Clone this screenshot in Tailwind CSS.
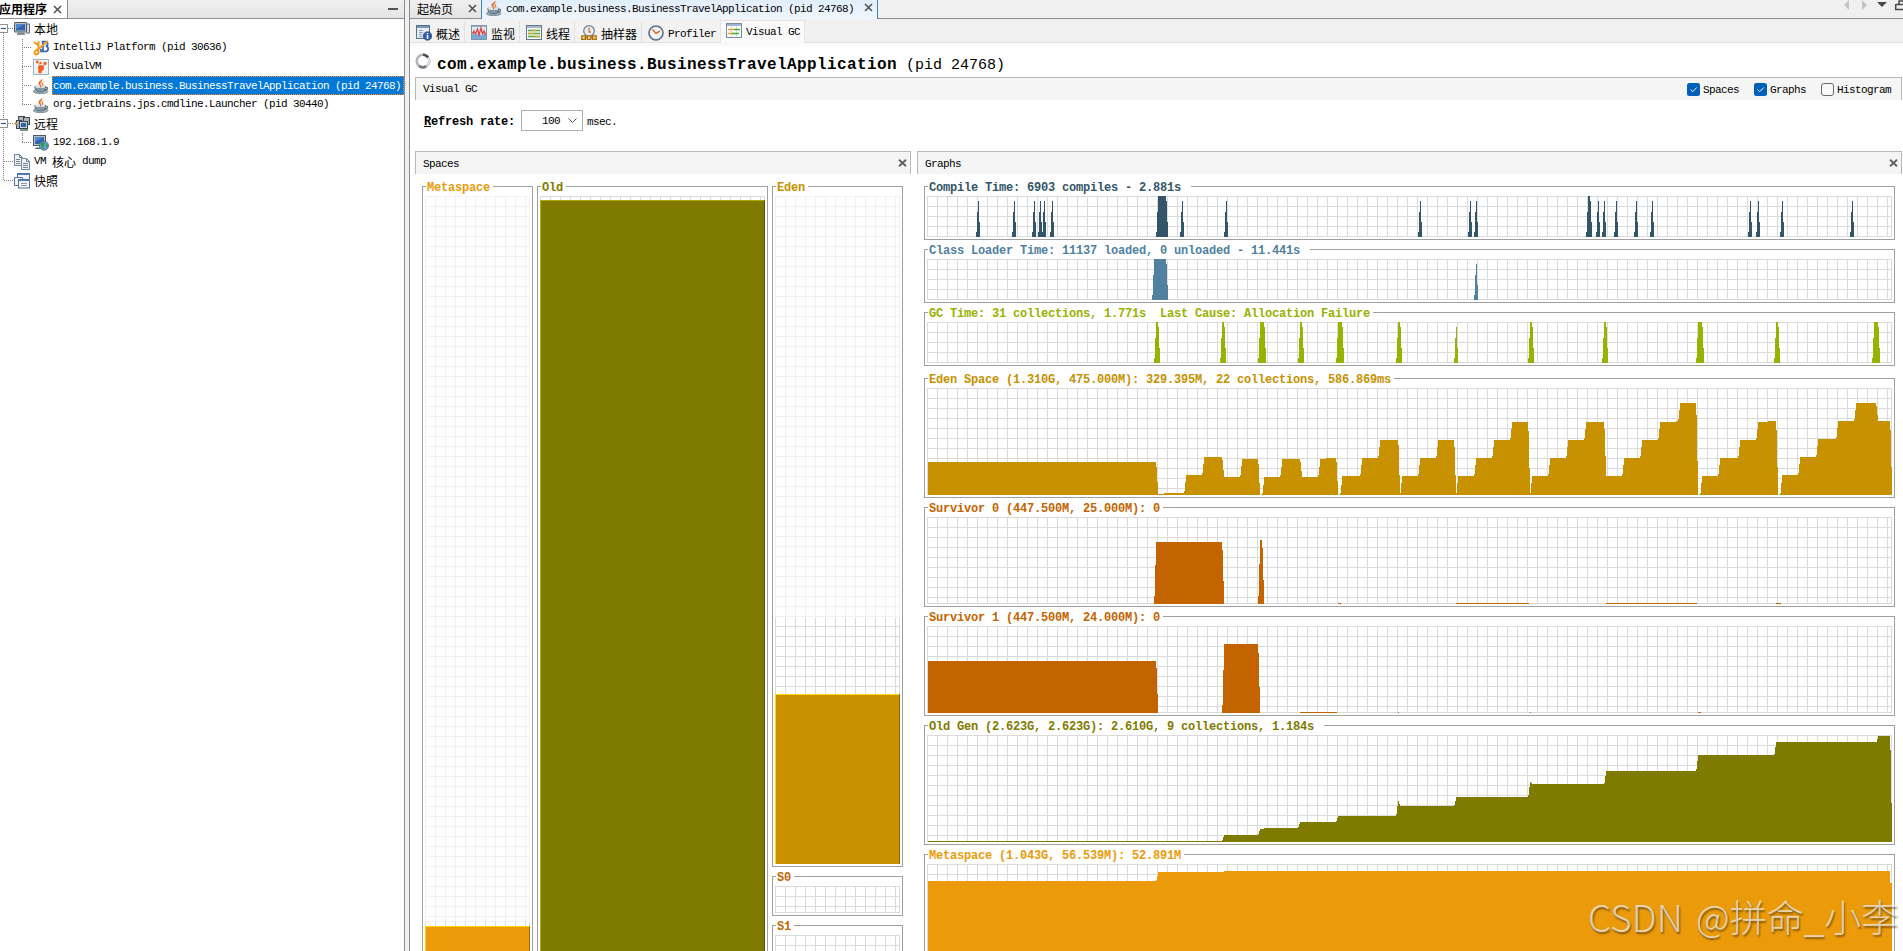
<!DOCTYPE html>
<html lang="zh-CN">
<head>
    <meta charset="UTF-8">
    <meta name="viewport" content="width=device-width, initial-scale=1.0">
    <title>VisualVM - Visual GC</title>
    <script src="https://cdn.jsdelivr.net/npm/@tailwindcss/browser@4"></script>
    <style>
        body { font-family: 'Liberation Mono', 'Noto Sans CJK SC', monospace; font-size: 11px; letter-spacing: -0.6px; line-height: 19px; color: #000; }
        .cjk { font-family: 'Noto Sans CJK SC', sans-serif; font-size: 12px; letter-spacing: 0; }
        /* titled boxes */
        fieldset { border: 1px solid #a0a0a0; padding: 3px 2px 2px; min-width: 0; }
        legend { height: 13px; line-height: 16px; margin-left: 1px; padding: 0 3px 0 1px; font-size: 12px; font-weight: 700; letter-spacing: -0.2px; white-space: pre; }
        /* 10px grid behind every chart */
        .grid-bg { --line: #dadada; position: relative; border-right: 1px solid var(--line); border-bottom: 1px solid var(--line); background-image: linear-gradient(var(--line) 1px, transparent 1px), linear-gradient(90deg, var(--line) 1px, transparent 1px); background-size: 10px 10px; }
        .grid-light { --line: #f1f1f1; }
        .chart { position: absolute; left: 0; top: 0; width: 965px; height: 100%; overflow: visible; shape-rendering: crispEdges; }
    </style>
</head>
<body class="bg-[#f0f0f0] w-[1903px] h-[951px] overflow-hidden relative">

    <!-- Icon sprite -->
    <svg class="hidden">
        <symbol id="i-java" viewBox="0 0 16 16">
            <path d="M8.800 0c1.200 2-3.300 3-3.300 5.200 0 1.500 1.500 2.200 2.100 3.600.6-1.600-.5-2.600-.1-3.700C8 3.800 10.600 2.500 8.800 0z" fill="#e8641b"/>
            <path d="M11 3C9 3.800 7.900 5 8.700 6.200c.5.800.3 1.600-.3 2.500 2.300-1.100 2.400-2.100 1.600-3.200-.5-.7 0-1.500 1-2.500z" fill="#f08a3c"/>
            <ellipse cx="7.600" cy="13.500" rx="7.300" ry="2.200" fill="#9fb0b8" stroke="#63777f" stroke-width=".7"/>
            <path d="M1.800 8.300h11c0 3.200-1.500 5.200-3.400 5.500H5.300C3.400 13.500 1.800 11.500 1.800 8.300z" fill="#8299a5" stroke="#4b6370" stroke-width=".8"/>
            <ellipse cx="7.300" cy="8.700" rx="5.300" ry="1.200" fill="#dfe7ea"/>
            <path d="M7.200 9.300c.8-.6.8-1.400.4-2.200" stroke="#e8641b" stroke-width="1.200" fill="none"/>
            <path d="M12.500 9.300c2.800-.6 3 2.500-1.100 2.900" fill="none" stroke="#4b6370" stroke-width="1.100"/>
        </symbol>
        <symbol id="i-close" viewBox="0 0 9 9"><path d="M1 1l7 7M8 1L1 8" stroke="#505050" stroke-width="1.500"/></symbol>
        <symbol id="i-close-sm" viewBox="0 0 9 8"><path d="M1 .8l7 6.400M8 .8L1 7.200" stroke="#606060" stroke-width="1.900"/></symbol>
    </svg>

    <div class="flex h-full">

        <!-- Applications tree -->
        <aside class="w-[405px] shrink-0 bg-white border-r border-[#8c8c94] flex flex-col relative">
            <div class="h-[19px] flex border-b border-[#8c8c94] bg-linear-to-b from-[#f0f0f0] to-[#e4e4e4]">
                <div class="w-[68px] bg-white border-r border-[#8c8c94] flex items-center justify-between pr-[5px]">
                    <span class="cjk font-bold -ml-px leading-[18px]">应用程序</span>
                    <svg class="size-[9px]"><use href="#i-close"/></svg>
                </div>
                <div class="flex-1 flex justify-end pr-[6px] pt-2"><span class="w-[10px] h-[2px] bg-[#555]"></span></div>
            </div>

            <!-- tree connector lines -->
            <svg class="absolute left-0 top-[19px] w-14 h-[180px]" fill="none" stroke="#808080" shape-rendering="crispEdges">
                <g stroke-dasharray="1 1">
                    <path d="M3.500 14V162M3.500 142.500H14M3.500 161.500H14M8 9.500h5M8 104.500h5M22.500 20V86M22 28.500h10M22 47.500h10M22 66.500h10M22 85.500h10M22.500 114v10M22 123.500h10"/>
                </g>
                <rect x="-.5" y="5.500" width="8" height="8" fill="#fff" stroke="#919191"/><path d="M1 9.500h5" stroke="#2a4a9a"/>
                <rect x="-.5" y="100.500" width="8" height="8" fill="#fff" stroke="#919191"/><path d="M1 104.500h5" stroke="#2a4a9a"/>
            </svg>

            <ul class="relative">
                <li class="h-[19px] flex items-center gap-1 pl-[14px]">
                    <svg class="size-4" viewBox="0 0 16 16"><path d="M12 3h3.500v9H12" fill="#d4d8da" stroke="#667"/><rect x=".5" y="1.500" width="12" height="9.500" rx=".5" fill="#b8c0c6" stroke="#4d5a66"/><rect x="2" y="3" width="9" height="6.500" fill="#2d64ad"/><path d="M2 3h9L2 8z" fill="#4f86c8"/><path d="M4 12h6l1 1.500H3z" fill="#8b969d" stroke="#55606a" stroke-width=".5"/></svg>
                    <span class="cjk leading-[20px]">本地</span>
                </li>
                <li class="h-[19px] flex items-center gap-1 pl-[33px]">
                    <svg class="size-4" viewBox="0 0 16 16" fill="none"><path d="M8.500 1.500h3.500c3.600 0 3.400 4.500.6 4.700 3.400.2 3.500 5.300-.3 5.300H8V9m2-7v9" stroke="#3566b5" stroke-width="1.700"/><path d="M1 2l5 4M15 1L5 9.500M5.500 1v11c0 3-4 3.300-4 .5 0-2 2.500-2.500 4-3.500" stroke="#f39a1e" stroke-width="2"/></svg>
                    <span>IntelliJ Platform (pid 30636)</span>
                </li>
                <li class="h-[19px] flex items-center gap-1 pl-[33px]">
                    <svg class="size-4" viewBox="0 0 16 16"><rect x=".5" y=".5" width="15" height="15" fill="#eef3f8" stroke="#9db2c8"/><g fill="#f0641e"><circle cx="8" cy="9" r="3"/><circle cx="4.200" cy="3" r="1.400"/><circle cx="7.500" cy="4" r="1.200"/><circle cx="12" cy="4.500" r="1.700"/><circle cx="7" cy="12.500" r="2"/><path d="M4 3l3.500 6 4.800-4.500L9 9z"/></g></svg>
                    <span>VisualVM</span>
                </li>
                <li class="h-[19px] flex items-center pl-[33px]">
                    <svg class="size-4"><use href="#i-java"/></svg>
                    <span class="ml-[3px] h-[19px] flex-1 bg-[#0078d7] text-white border border-dotted border-[#ff8728] leading-[18px] whitespace-nowrap">com.example.business.BusinessTravelApplication (pid 24768)</span>
                </li>
                <li class="h-[19px] flex items-center gap-1 pl-[33px]">
                    <svg class="size-4"><use href="#i-java"/></svg>
                    <span>org.jetbrains.jps.cmdline.Launcher (pid 30440)</span>
                </li>
                <li class="h-[19px] flex items-center gap-1 pl-[14px]">
                    <svg class="size-4" viewBox="0 0 16 16"><rect x="4.500" y=".5" width="6" height="5" fill="#aab4bc" stroke="#3c4650"/><rect x="9.500" y="1.500" width="6" height="7" fill="#aab4bc" stroke="#3c4650"/><rect x="2.500" y="4.500" width="5" height="8" fill="#aab4bc" stroke="#3c4650"/><rect x="5.500" y="5.500" width="8" height="7" fill="#c8d0d6" stroke="#3c4650"/><rect x="7" y="7" width="5" height="4" fill="#2d64ad"/><circle cx="1.800" cy="7.500" r="1.400" fill="#d98e2b"/><path d="M6 14h8" stroke="#5d6a73" stroke-width="1.500"/><path d="M11 13h3v1h-3z" fill="#4fb32f"/></svg>
                    <span class="cjk leading-[20px]">远程</span>
                </li>
                <li class="h-[19px] flex items-center gap-1 pl-[33px]">
                    <svg class="size-4" viewBox="0 0 16 16"><rect x=".5" y=".5" width="12" height="10" fill="#b8c0c6" stroke="#4d5a66"/><rect x="2" y="2" width="9" height="7" fill="#2d64ad"/><path d="M2 2h9L2 7z" fill="#4f86c8"/><path d="M3 12.500h6l1 1.500H2z" fill="#55606a"/><circle cx="11" cy="10.700" r="4.500" fill="#6fa3d6" stroke="#36628f" stroke-width=".8"/><path d="M8 8.500c1.500-2 4-1.500 4 0s-1.500 1-1.500 2.500 1 2 0 3c-2-1-3-3-2.500-5.500zM13.500 8.500c1.500 1 1.500 3.500 0 4.500-1-1-1-3 0-4.500z" fill="#2f9a42"/></svg>
                    <span>192.168.1.9</span>
                </li>
                <li class="h-[19px] flex items-center gap-1 pl-[14px]">
                    <svg class="size-4" viewBox="0 0 16 16" stroke="#71869c" fill="#eef2f6"><path d="M.5.500h5l3 3v8h-8z"/><path d="M5.500.500v3h3M2 5.500h4M2 7.500h4M2 9.500h4" fill="none"/><path d="M7.500 4.500h5l3 3v8h-8z"/><path d="M12.500 4.500v3h3M9 9.500h5M9 11.500h5M9 13.500h5" fill="none"/></svg>
                    <span class="flex whitespace-pre">VM <span class="cjk leading-[20px]">核心</span> dump</span>
                </li>
                <li class="h-[19px] flex items-center gap-1 pl-[14px]">
                    <svg class="size-4" viewBox="0 0 16 16" stroke="#53719f" fill="#f2f5f9"><rect x="3.500" y=".5" width="12" height="9"/><path d="M4 1.500h11" stroke="#4d7cc0"/><path d="M.5 4.500h8v8h-8z"/><rect x="4.500" y="6.500" width="11" height="8.500"/><path d="M5 7.500h10" stroke="#4d7cc0"/><path d="M7 10.500h6M7 12.500h6" stroke="#8897aa"/></svg>
                    <span class="cjk leading-[20px]">快照</span>
                </li>
            </ul>
        </aside>

        <!-- Main area -->
        <main class="ml-[4px] flex-1 min-w-0 border-l border-[#8c8c94] bg-white flex flex-col">

            <!-- Document tabs -->
            <div class="h-[19px] shrink-0 flex bg-[#f0f0f0] whitespace-nowrap">
                <div class="w-[71px] border-b border-[#8c8c94] bg-linear-to-b from-[#f0f0f0] to-[#e4e4e4] flex items-center justify-between pl-[7px] pr-1">
                    <span class="cjk leading-[18px]">起始页</span>
                    <svg class="size-[9px] -mt-[2px]"><use href="#i-close"/></svg>
                </div>
                <div class="w-[397px] border-x border-[#3f83bb] bg-linear-to-b from-[#e1eefb] to-[#f0f6fd] flex items-start pl-1 pr-[4px]">
                    <svg class="size-4"><use href="#i-java"/></svg>
                    <span class="ml-[4px] leading-[19px]">com.example.business.BusinessTravelApplication (pid 24768)</span>
                    <svg class="size-[9px] ml-auto mt-[3px]"><use href="#i-close"/></svg>
                </div>
                <div class="flex-1 border-b border-[#8c8c94] flex justify-end">
                    <svg class="w-[60px] h-4" viewBox="0 0 60 16"><path d="M6 0v10L1 5zM19 0v10l5-5z" fill="#c4c4c4"/><path d="M34 2h10l-5 5z" fill="#484848"/><path d="M56 4V1h5M53 4.500h7M52.700 4v5.500H60" fill="none" stroke="#484848" stroke-width="1.500"/></svg>
                </div>
            </div>

            <!-- View tabs -->
            <div class="h-[24px] shrink-0 flex items-end bg-[#f0f0f0] border-b border-[#e2e2e2]">
                <div class="w-[55px] h-[20px] border-r border-[#e0e0e0] bg-[#f2f2f2] flex items-center pl-[6px] pt-[2px] gap-1">
                    <svg class="size-4" viewBox="0 0 16 16"><rect x=".5" y=".5" width="13" height="13" fill="#e8eef4" stroke="#54708c"/><path d="M1 2h12" stroke="#7d97b3" stroke-width="2"/><path d="M3 5.500h4M3 7.500h4M3 9.500h3M3 11.500h3" stroke="#8ba0b3"/><circle cx="11.500" cy="11" r="4.300" fill="#2c5ba8" stroke="#1d3e78" stroke-width=".6"/><path d="M11.500 10v4M11.500 8v1.300" stroke="#fff" stroke-width="1.600"/></svg>
                    <span class="cjk leading-[18px] pt-px">概述</span>
                </div>
                <div class="w-[55px] h-[20px] border-r border-[#e0e0e0] bg-[#f2f2f2] flex items-center pl-[6px] pt-[2px] gap-1">
                    <svg class="size-4" viewBox="0 0 16 16"><rect x=".5" y=".5" width="15" height="14" fill="#dce7f0" stroke="#7c93aa"/><path d="M1 1.500h14" stroke="#9bb4d0"/><path d="M1 14V10l2-2 2 2 3-2 3 3 2-3 2 2v4z" fill="#78a8d4"/><path d="M1 9l2-3 1.500 3L6.500 4 8 10l2-7 1.500 6L13 6l2 4" fill="none" stroke="#e04848" stroke-width="1.300"/></svg>
                    <span class="cjk leading-[18px] pt-px">监视</span>
                </div>
                <div class="w-[55px] h-[20px] border-r border-[#e0e0e0] bg-[#f2f2f2] flex items-center pl-[6px] pt-[2px] gap-1">
                    <svg class="size-4" viewBox="0 0 16 16"><rect x=".5" y=".5" width="15" height="14" fill="#f6f8f6" stroke="#64778a"/><path d="M1 2h14" stroke="#a7b8c8" stroke-width="2"/><path d="M2 5.500h12M2 8.500h12M2 11.500h12" stroke="#55a845" stroke-width="1.500"/><path d="M7 5.500h3M3 8.500h5M9 11.500h4" stroke="#eea63a" stroke-width="1.500"/></svg>
                    <span class="cjk leading-[18px] pt-px">线程</span>
                </div>
                <div class="w-[67px] h-[20px] border-r border-[#e0e0e0] bg-[#f2f2f2] flex items-center pl-[6px] pt-[2px] gap-1">
                    <svg class="size-4" viewBox="0 0 16 16"><circle cx="8" cy="6" r="5.300" fill="#e6edf5" stroke="#6d7f93" stroke-width="1.200"/><path d="M8 2.500V7h2" fill="none" stroke="#e07a2a" stroke-width="1.300"/><path d="M4.500 12.500h8" stroke="#a86f10"/><path d="M.8 10.800h3.600v3.500H.8zM6.200 10.800h3.600v3.500H6.200zM11.600 10.800h3.600v3.500h-3.600z" fill="#f8d98a" stroke="#a86f10" stroke-width="1.300"/></svg>
                    <span class="cjk leading-[18px] pt-px">抽样器</span>
                </div>
                <div class="w-[78px] h-[20px] bg-[#f2f2f2] flex items-center pl-[6px] pt-[2px] gap-1">
                    <svg class="size-4" viewBox="0 0 16 16"><circle cx="8" cy="8" r="7" fill="#e6edf5" stroke="#5b6f86" stroke-width="1.600"/><circle cx="8" cy="8" r="5" fill="#f4f8fc"/><path d="M4.500 4.500L8 8.500l4-2.500" fill="none" stroke="#e0702a" stroke-width="1.600"/></svg>
                    <span class="leading-[18px] pt-[2px]">Profiler</span>
                </div>
                <div class="w-[85px] h-[23px] -mb-px bg-[#fafafa] border-x border-t border-[#e4e4e4] flex items-center pl-[5px] gap-1 pb-[2px]">
                    <svg class="size-4" viewBox="0 0 16 16"><rect x=".5" y=".5" width="15" height="14" fill="#fbfcfb" stroke="#7b8ca0"/><path d="M1 2h14" stroke="#9fb6d4" stroke-width="2"/><path d="M5.500 3v11M10.500 3v11" stroke="#d8dde0"/><path d="M2 6.500h6M2 10.500h4" stroke="#f0a030" stroke-width="1.300"/><path d="M8 6.500h6M6 10.500h7" stroke="#3faa30" stroke-width="1.300"/></svg>
                    <span class="leading-[18px] pt-[2px]">Visual GC</span>
                </div>
            </div>
            <div class="h-[3px] shrink-0 bg-[#fafafa]"></div>

            <div class="flex-1 min-h-0 pl-[5px] pr-px flex flex-col">

                <!-- Title -->
                <div class="h-[31px] shrink-0 flex items-start whitespace-pre">
                    <svg class="size-4 mt-[7px]" viewBox="0 0 16 16" fill="none" stroke-width="2.600"><circle cx="8" cy="8" r="6.300" stroke="#b4b4ba"/><path d="M8 1.700A6.300 6.300 0 0 1 13 4.500" stroke="#4c4c55"/><path d="M13 4.500A6.300 6.300 0 0 1 12 12.500" stroke="#dcdce0"/><path d="M11 13.500A6.300 6.300 0 0 1 4 13" stroke="#777780"/></svg>
                    <h1 class="ml-[6px] mt-[6px] text-[16px] leading-[26px]"><span class="font-bold tracking-[0.4px]">com.example.business.BusinessTravelApplication</span><span class="text-[15px] tracking-normal"> (pid 24768)</span></h1>
                </div>

                <!-- Visual GC bar -->
                <div class="h-[23px] shrink-0 bg-[#f5f5f5] border border-b-0 border-[#b9b9b9] flex items-center pl-[7px] pr-[9px]">
                    <span>Visual GC</span>
                    <div class="ml-auto flex items-center gap-[14px] pt-[2px]">
                        <label class="flex items-center gap-[3px]"><svg class="size-[13px] -mt-px" viewBox="0 0 13 13"><rect width="13" height="13" rx="2.500" fill="#005fb8"/><path d="M3.500 6.500l2.200 2.200L9.700 4.500" fill="none" stroke="#fff"/></svg><span class="w-[37px]">Spaces</span></label>
                        <label class="flex items-center gap-[3px]"><svg class="size-[13px] -mt-px" viewBox="0 0 13 13"><rect width="13" height="13" rx="2.500" fill="#005fb8"/><path d="M3.500 6.500l2.200 2.200L9.700 4.500" fill="none" stroke="#fff"/></svg><span class="w-[37px]">Graphs</span></label>
                        <label class="flex items-center gap-[3px]"><svg class="size-[13px] -mt-px" viewBox="0 0 13 13"><rect x=".5" y=".5" width="12" height="12" rx="2.500" fill="#f8f8f8" stroke="#686868"/></svg><span class="w-[55px]">Histogram</span></label>
                    </div>
                </div>

                <!-- Refresh rate -->
                <div class="h-[51px] shrink-0 flex items-start pl-[9px] pt-[10px]">
                    <span class="w-[97px] font-bold text-[12px] tracking-[-0.2px] leading-[24px]"><span class="underline">R</span>efresh rate:</span>
                    <div class="w-[62px] h-[21px] border border-[#ababb3] flex items-center justify-end pr-[5px] leading-[20px]">
                        <span class="pt-px">100</span>
                        <svg class="ml-[8px] w-[9px] h-[5px]" viewBox="0 0 9 5"><path d="M.5.500l4 4 4-4" fill="none" stroke="#505050"/></svg>
                    </div>
                    <span class="ml-1 leading-[24px]">msec.</span>
                </div>

                <div class="flex-1 min-h-0 flex gap-[6px]">

                    <!-- Spaces -->
                    <section class="w-[496px] shrink-0 flex flex-col">
                        <div class="h-[23px] shrink-0 bg-[#f5f5f5] border border-b-0 border-[#b9b9b9] flex items-center justify-between pl-[7px] pr-[3px]">
                            <span class="pt-[2px]">Spaces</span>
                            <svg class="w-[9px] h-2"><use href="#i-close-sm"/></svg>
                        </div>
                        <div class="flex gap-1 pl-[7px] pt-[6px] h-[800px] shrink-0">
                            <fieldset class="w-[111px] text-[#eb9b0a]">
                                <legend>Metaspace</legend>
                                <div class="w-[105px] h-[726px] grid-bg grid-light"></div>
                                <div class="w-[105px] h-1 grid-bg -mb-px !border-b-0 !bg-[position:0_4px]"></div>
                                <div class="w-[105px] h-[60px] mt-px bg-[#eb9b0a] border-t border-l border-r border-t-[#ffd200] border-l-[#ffd200] border-r-[#a06a00]"></div>
                            </fieldset>
                            <fieldset class="w-[231px] text-[#7f7b00]">
                                <legend>Old</legend>
                                <div class="w-[225px] h-1 grid-bg !border-b-0"></div>
                                <div class="w-[225px] h-[780px] bg-[#7f7b00] border-t border-x border-t-[#b0aa00] border-l-[#b0aa00] border-r-[#565300]"></div>
                            </fieldset>
                            <div class="w-[131px] flex flex-col gap-[3px]">
                                <fieldset class="shrink-0 text-[#c79100]">
                                    <legend>Eden</legend>
                                    <div class="w-[125px] h-[422px] grid-bg grid-light !border-b-0"></div>
                                    <div class="w-[125px] h-[76px] grid-bg !border-b-0 !bg-[position:0_8px]"></div>
                                    <div class="w-[125px] h-[170px] bg-[#c79100] border-t border-x border-t-[#ffd200] border-l-[#ffd200] border-r-[#8a6400]"></div>
                                </fieldset>
                                <fieldset class="shrink-0 text-[#c36400]">
                                    <legend>S0</legend>
                                    <div class="w-[125px] h-[27px] grid-bg"></div>
                                </fieldset>
                                <fieldset class="shrink-0 text-[#c36400]">
                                    <legend>S1</legend>
                                    <div class="w-[125px] h-[27px] grid-bg"></div>
                                </fieldset>
                            </div>
                        </div>
                    </section>

                    <!-- Graphs -->
                    <section class="flex-1 min-w-0 flex flex-col">
                        <div class="h-[23px] shrink-0 bg-[#f5f5f5] border border-b-0 border-[#b9b9b9] flex items-center justify-between pl-[7px] pr-[3px]">
                            <span class="pt-[2px]">Graphs</span>
                            <svg class="w-[9px] h-2"><use href="#i-close-sm"/></svg>
                        </div>
                        <div class="w-[978px] pl-[7px] pt-[6px] flex flex-col gap-[3px]">
                            <fieldset class="text-[#335569]">
                                <legend>Compile Time: 6903 compiles - 2.881s </legend>
                                <div class="h-[41px] grid-bg"><svg class="chart" fill="currentColor" id="compile"></svg></div>
                            </fieldset>
                            <fieldset class="text-[#5081a0]">
                                <legend>Class Loader Time: 11137 loaded, 0 unloaded - 11.441s </legend>
                                <div class="h-[41px] grid-bg"><svg class="chart" fill="currentColor" id="loader"></svg></div>
                            </fieldset>
                            <fieldset class="text-[#98b200] mb-[3px]">
                                <legend>GC Time: 31 collections, 1.771s  Last Cause: Allocation Failure</legend>
                                <div class="h-[41px] grid-bg"><svg class="chart" fill="currentColor" id="gc"></svg></div>
                            </fieldset>
                            <fieldset class="text-[#c79100]">
                                <legend>Eden Space (1.310G, 475.000M): 329.395M, 22 collections, 586.869ms</legend>
                                <div class="h-[107px] grid-bg"><svg class="chart" fill="currentColor" id="eden"></svg></div>
                            </fieldset>
                            <fieldset class="text-[#c36400]">
                                <legend>Survivor 0 (447.500M, 25.000M): 0</legend>
                                <div class="h-[87px] grid-bg"><svg class="chart" fill="currentColor" id="s0"></svg></div>
                            </fieldset>
                            <fieldset class="text-[#c36400]">
                                <legend>Survivor 1 (447.500M, 24.000M): 0</legend>
                                <div class="h-[87px] grid-bg"><svg class="chart" fill="currentColor" id="s1"></svg></div>
                            </fieldset>
                            <fieldset class="text-[#7f7b00]">
                                <legend>Old Gen (2.623G, 2.623G): 2.610G, 9 collections, 1.184s </legend>
                                <div class="h-[107px] grid-bg"><svg class="chart" fill="currentColor" id="old"></svg></div>
                            </fieldset>
                            <fieldset class="text-[#eb9b0a]">
                                <legend>Metaspace (1.043G, 56.539M): 52.891M</legend>
                                <div class="h-[107px] grid-bg"><svg class="chart" fill="currentColor" id="meta"></svg></div>
                            </fieldset>
                        </div>
                    </section>
                </div>
            </div>
        </main>
    </div>

    <!-- Watermark -->
    <div class="absolute left-[1588px] top-[890px] font-['Noto_Sans_CJK_SC',sans-serif] font-light text-[37px] leading-[52px] tracking-normal [word-spacing:5px] text-[#ebebeb]/75 whitespace-nowrap [text-shadow:1px_2px_2px_rgba(0,0,0,0.45)]">CSDN @拼命_小李</div>

    <script>
        // Time charts: [x, width of the plateau]
        const spikes = {
            compile: [[49,0],[85,0],[105,0],[111,0],[115,0],[123,0],[229,8],[253,0],[297,0],[491,0],[541,0],[547,0],[659,2],[669,0],[675,0],[687,0],[707,0],[723,0],[821,0],[829,0],[853,0],[923,0]],
            loader: [[225,12],[547,0]],
            gc: [[227,2],[293,2],[331,4],[371,2],[409,4],[469,2],[527,0],[601,2],[675,2],[769,4],[847,2],[945,4]]
        };

        // Memory charts: x,top pairs; each top holds until the next x
        const steps = {
            eden: [107, '1,74 229,79 230,94 231,106 237,105 257,103 258,94 259,87 275,85 276,76 277,69 295,72 296,82 297,89 313,87 314,78 315,71 331,76 332,95 333,107 335,105 336,97 337,89 353,87 354,79 355,71 373,74 374,83 375,89 391,87 392,79 393,71 399,70 409,74 410,93 411,107 413,105 414,97 415,88 433,86 434,77 435,70 451,68 452,59 453,52 471,57 472,87 473,105 474,95 475,88 491,86 492,77 493,70 509,68 510,59 511,52 527,59 528,87 529,105 530,95 531,88 547,86 548,77 549,70 565,68 566,59 567,52 583,50 584,41 585,34 601,43 602,80 603,105 604,95 605,88 621,86 622,77 623,70 639,68 640,59 641,52 657,50 658,41 659,34 677,41 678,68 679,88 695,86 696,77 697,70 713,68 714,59 715,52 731,50 732,41 733,34 749,33 751,31 752,22 753,15 769,27 770,73 771,107 773,105 774,95 775,88 791,86 792,77 793,70 811,68 812,59 813,52 829,50 830,41 831,34 841,33 849,42 850,79 851,107 853,105 854,95 855,87 871,85 872,76 873,69 889,67 890,58 891,51 909,49 910,40 911,33 927,31 928,22 929,15 949,18 950,27 951,33 963,42 964,79'],
            s0: [87, '227,79 228,48 229,25 295,33 296,64 297,87 331,79 332,47 333,23 335,31 336,63 337,87 411,86 414,87 529,86 602,87 679,86 770,87 849,86 854,87'],
            s1: [87, '1,35 229,42 230,68 231,87 295,79 296,44 297,18 331,27 332,61 333,87 373,86 410,87 471,86 472,87 603,86 604,87 771,86 774,87'],
            old: [107, '1,106 295,105 296,102 297,100 331,99 332,96 333,94 337,93 371,92 372,89 373,87 409,86 410,83 411,81 469,79 470,71 471,66 472,69 473,71 527,70 528,66 529,62 601,60 602,52 603,47 604,48 605,49 677,48 678,41 679,36 769,34 770,26 771,20 847,19 848,12 849,7 950,4 951,1 963,15 964,68'],
            meta: [107, '1,17 229,16 230,12 231,8 297,7 963,19']
        };

        function draw(id, d) {
            document.getElementById(id).innerHTML = `<path d="${d}"/>`;
        }

        for (const [id, list] of Object.entries(spikes)) {
            draw(id, list.map(([x, w]) => `M${x} 41v-5h1v-20h1V${w ? 0 : 5}h${w}V5h1v21h1v15z`).join(''));
        }

        for (const [id, [bottom, text]] of Object.entries(steps)) {
            const points = text.split(' ').map(p => p.split(','));
            draw(id, `M${points[0][0]} ${bottom}` + points.map(([x, y]) => `H${x}V${y}`).join('') + `H965V${bottom}z`);
        }
    </script>
</body>
</html>
